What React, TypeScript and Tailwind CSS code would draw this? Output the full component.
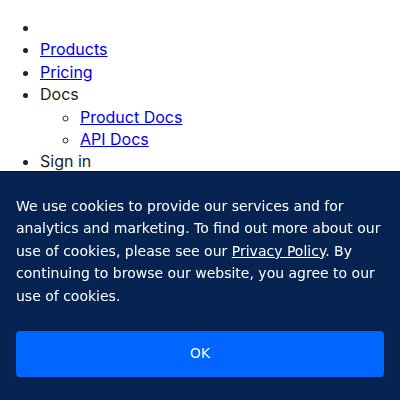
import React from 'react';

export default function App() {
  return (
    <div className="min-h-[400px] bg-white text-[#222] font-['Inter',sans-serif]">
      {/* Nav (unstyled list) */}
      <ul className="my-4 list-disc pl-10 text-base leading-[1.4]">
        <li>&nbsp;</li>
        <li>
          <a href="#" className="text-[#0000ee] underline">Products</a>
        </li>
        <li>
          <a href="#" className="text-[#0000ee] underline">Pricing</a>
        </li>
        <li>
          Docs
          <ul className="list-[circle] pl-10">
            <li>
              <a href="#" className="text-[#0000ee] underline">Product Docs</a>
            </li>
            <li>
              <a href="#" className="text-[#0000ee] underline">API Docs</a>
            </li>
          </ul>
        </li>
        <li>Sign in</li>
      </ul>

      {/* Cookie banner */}
      <div className="fixed bottom-0 left-0 right-0 h-[229px] border-t border-[#01163d] bg-[#021f4e]/[0.98] px-4 pt-[23px] pb-6 font-['DejaVu_Sans',sans-serif] text-white">
        <p className="text-[14px] leading-[1.6]">
          We use cookies to provide our services and for analytics and marketing. To find out more about our use of cookies, please see our{' '}
          <a href="#" className="underline">Privacy Policy</a>. By continuing to browse our website, you agree to our use of cookies.
        </p>
        <button className="mt-6 flex h-[46px] w-full items-center justify-center rounded bg-[#0066ff] text-[14px] text-white">
          OK
        </button>
      </div>
    </div>
  );
}
